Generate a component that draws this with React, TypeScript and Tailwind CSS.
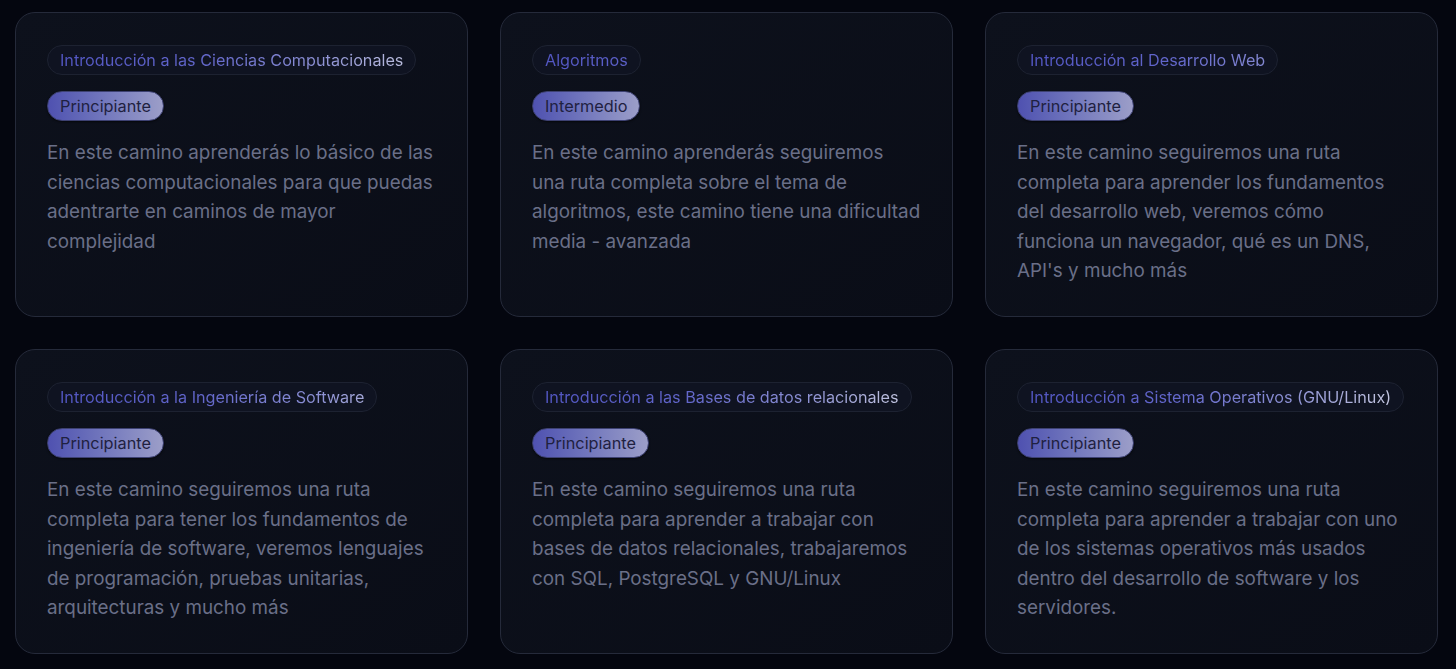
const paths = [
  {
    title: "Introducción a las Ciencias Computacionales",
    level: "Principiante",
    text: "En este camino aprenderás lo básico de las ciencias computacionales para que puedas adentrarte en caminos de mayor complejidad",
  },
  {
    title: "Algoritmos",
    level: "Intermedio",
    text: "En este camino aprenderás seguiremos una ruta completa sobre el tema de algoritmos, este camino tiene una dificultad media - avanzada",
  },
  {
    title: "Introducción al Desarrollo Web",
    level: "Principiante",
    text: "En este camino seguiremos una ruta completa para aprender los fundamentos del desarrollo web, veremos cómo funciona un navegador, qué es un DNS, API's y mucho más",
  },
  {
    title: "Introducción a la Ingeniería de Software",
    level: "Principiante",
    text: "En este camino seguiremos una ruta completa para tener los fundamentos de ingeniería de software, veremos lenguajes de programación, pruebas unitarias, arquitecturas y mucho más",
  },
  {
    title: "Introducción a las Bases de datos relacionales",
    level: "Principiante",
    text: "En este camino seguiremos una ruta completa para aprender a trabajar con bases de datos relacionales, trabajaremos con SQL, PostgreSQL y GNU/Linux",
  },
  {
    title: "Introducción a Sistema Operativos (GNU/Linux)",
    level: "Principiante",
    text: "En este camino seguiremos una ruta completa para aprender a trabajar con uno de los sistemas operativos más usados dentro del desarrollo de software y los servidores.",
  },
]

function PathCard({ title, level, text }: { title: string; level: string; text: string }) {
  return (
    <div className="h-[305px] rounded-[20px] border border-[#252a3a] bg-gradient-to-br from-[#0d111c] to-[#0a0d17] px-[31px] pt-8">
      <div className="flex">
        <span className="whitespace-nowrap rounded-full border border-[#1d2231] bg-[#0f1321] px-3 py-[2px] text-[16.2px] leading-6">
          <span className="bg-[linear-gradient(90deg,#5256c2_0px,#6266cb_140px,#8d91d4_260px,#c3c6e0_360px)] bg-clip-text text-transparent">
            {title}
          </span>
        </span>
      </div>
      <div className="mt-4 flex">
        <span className="rounded-full border border-[#3d4172] bg-gradient-to-r from-[#4f51b0] to-[#9c9ec8] px-3 py-[2px] text-[16.3px] leading-6 text-[#1f2140] shadow-[0_1px_2px_rgba(0,0,0,0.6)]">
          {level}
        </span>
      </div>
      <p className="mt-4 pt-px text-[18.85px] leading-[29.5px] text-[#6a6f88]">{text}</p>
    </div>
  )
}

export default function App() {
  return (
    <div className="min-h-[669px] bg-[#04060f] pl-[15px] pr-[18px] pt-3 font-['Inter',sans-serif]">
      <div className="grid grid-cols-3 gap-8">
        {paths.map((p) => (
          <PathCard key={p.title} {...p} />
        ))}
      </div>
    </div>
  )
}
